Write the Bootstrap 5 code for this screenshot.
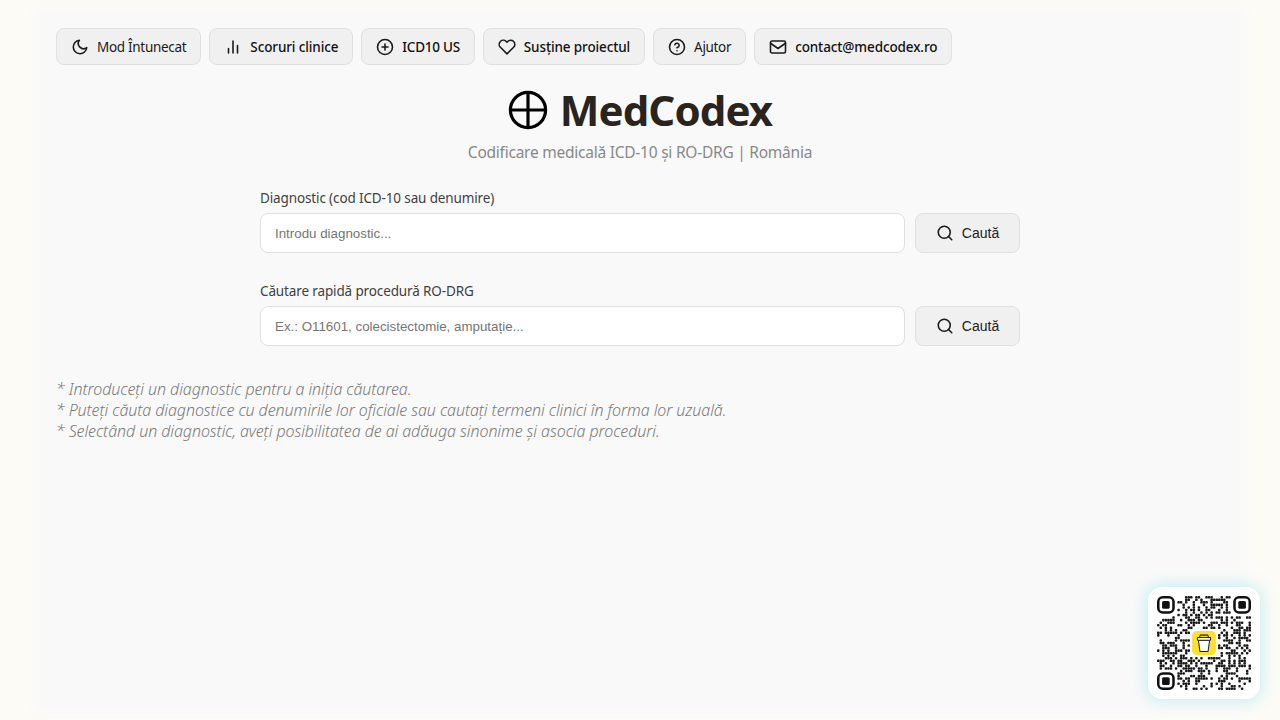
<!DOCTYPE html>
<html lang="ro">
<head>
<meta charset="utf-8">
<title>MedCodex</title>
<link href="https://cdn.jsdelivr.net/npm/bootstrap@5.3.0/dist/css/bootstrap.min.css" rel="stylesheet">
<style>
html,body{height:100%}
body{background:#fcfbf6;font-family:"Noto Sans","Open Sans",sans-serif;overflow:hidden}
.surface{margin:12px 40px 10px;height:698px;padding:16px;background:#f9f9f9;box-shadow:0 0 14px 4px #f9f9f9}
.tool-btn{display:inline-flex;align-items:center;gap:8px;height:37px;padding:1px 14px 0;background:#f0f0f0;border:1px solid #e0e0e0;border-radius:8px;color:#1a1a1a;font-size:13.5px;white-space:nowrap;letter-spacing:-.3px}
.tool-btn.strong{font-weight:500;color:#111;letter-spacing:-.12px}
.tool-btn.strong.tighter{letter-spacing:-.26px}
.tool-btn.snug{letter-spacing:-.34px}
.tool-btn svg,.go-btn svg{width:18px;height:18px;fill:none;stroke:#1a1a1a;stroke-width:2.1;stroke-linecap:round;stroke-linejoin:round;flex:none}
.brand{font-size:42px;font-weight:700;color:#2a241f;line-height:1.2;letter-spacing:-.9px;margin:0}
.brand svg{width:40px;height:40px}
.subtitle{font-size:15.5px;color:#888;letter-spacing:-.24px;margin-top:6px}
.search-zone{width:760px}
.field-label{font-size:13.5px;color:#3f3f3f;margin-bottom:5px;line-height:20px;letter-spacing:-.13px}
.field-input{height:40px;border:1px solid #e0e0e0;border-radius:8px;background:#fff;padding:1px 14px 0;font:13.33px "Liberation Sans",Arial,sans-serif;color:#333}
.field-input::placeholder{color:#757575;opacity:1}
.go-btn{flex:none;width:105px;height:40px;display:inline-flex;align-items:center;justify-content:center;gap:8px;background:#f0f0f0;border:1px solid #e0e0e0;border-radius:8px;color:#222;font:14px "Liberation Sans",Arial,sans-serif}
.notes{font-size:16px;font-style:italic;font-weight:300;color:#7a7a7a;line-height:21px;letter-spacing:-.08px}
.qr-card{position:fixed;right:20px;bottom:21px;width:112px;height:112px;background:#fff;border-radius:14px;box-shadow:0 0 14px 3px rgba(130,225,240,.4);display:flex;align-items:center;justify-content:center}
.qr-card svg{width:94px;height:94px;display:block}
</style>
</head>
<body>
<div class="surface">
  <div class="d-flex flex-wrap gap-2">
    <button class="tool-btn" type="button"><svg viewBox="0 0 24 24"><path d="M21 12.8A9 9 0 1 1 11.2 3a7 7 0 0 0 9.8 9.8z"/></svg>Mod Întunecat</button>
    <button class="tool-btn strong" type="button"><svg viewBox="0 0 24 24"><path d="M18 20V10M12 20V4M6 20v-6"/></svg>Scoruri clinice</button>
    <button class="tool-btn strong tighter" type="button"><svg viewBox="0 0 24 24"><circle cx="12" cy="12" r="10"/><path d="M12 8v8M8 12h8"/></svg>ICD10 US</button>
    <button class="tool-btn strong" type="button"><svg viewBox="0 0 24 24"><path d="M20.8 4.6a5.5 5.5 0 0 0-7.8 0L12 5.7l-1-1.1a5.5 5.5 0 0 0-7.8 7.8l1 1L12 21.2l7.8-7.8 1-1a5.5 5.5 0 0 0 0-7.8z"/></svg>Susține proiectul</button>
    <button class="tool-btn snug" type="button"><svg viewBox="0 0 24 24"><circle cx="12" cy="12" r="10"/><path d="M9.1 9a3 3 0 0 1 5.8 1c0 2-3 3-3 3M12 17h.01"/></svg>Ajutor</button>
    <button class="tool-btn strong" type="button"><svg viewBox="0 0 24 24"><rect x="2" y="4" width="20" height="16" rx="2"/><path d="M22 7l-10 7L2 7"/></svg>contact@medcodex.ro</button>
  </div>
  <div class="text-center" style="margin-top:20px">
    <h1 class="brand d-flex align-items-center justify-content-center" style="gap:12px"><svg viewBox="0 0 40 40" fill="none" stroke="#000" stroke-width="3.2"><circle cx="20" cy="20" r="17.6"/><path d="M20 2v36M2 20h36"/></svg>MedCodex</h1>
    <div class="subtitle">Codificare medicală ICD-10 și RO-DRG | România</div>
  </div>
  <div class="search-zone mx-auto" style="margin-top:23px">
    <div class="field-label">Diagnostic (cod ICD-10 sau denumire)</div>
    <div class="d-flex" style="gap:10px">
      <input class="field-input flex-grow-1" type="text" placeholder="Introdu diagnostic...">
      <button class="go-btn" type="button"><svg viewBox="0 0 24 24"><circle cx="11" cy="11" r="8"/><path d="M21 21l-4.3-4.3"/></svg>Caută</button>
    </div>
    <div class="field-label" style="margin-top:28px">Căutare rapidă procedură RO-DRG</div>
    <div class="d-flex" style="gap:10px">
      <input class="field-input flex-grow-1" type="text" placeholder="Ex.: O11601, colecistectomie, amputație...">
      <button class="go-btn" type="button"><svg viewBox="0 0 24 24"><circle cx="11" cy="11" r="8"/><path d="M21 21l-4.3-4.3"/></svg>Caută</button>
    </div>
  </div>
  <div class="notes" style="margin-top:33px">
    <div>* Introduceți un diagnostic pentru a iniția căutarea.</div>
    <div>* Puteți căuta diagnostice cu denumirile lor oficiale sau cautați termeni clinici în forma lor uzuală.</div>
    <div>* Selectând un diagnostic, aveți posibilitatea de ai adăuga sinonime și asocia proceduri.</div>
  </div>
</div>
<div class="qr-card"><svg id="qr" viewBox="0 0 37 37"></svg></div>
<script>
(function(){
  var n=37,s='',seed=20231;
  function r(){seed=(seed*16807)%2147483647;return seed/2147483647}
  function inFinder(x,y){return (x<8&&y<8)||(x>n-9&&y<8)||(x<8&&y>n-9)}
  function inLogo(x,y){return x>=13&&x<=23&&y>=13&&y<=23}
  var m=[];
  for(var y=0;y<n;y++){m[y]=[];for(var x=0;x<n;x++){m[y][x]=r()<.46}}
  for(y=0;y<n;y++)for(x=0;x<n;x++){
    if(inFinder(x,y)||inLogo(x,y)||!m[y][x])continue;
    s+='<rect x="'+x+'" y="'+y+'" width="1" height="1" rx=".35" fill="#1a1a1a"/>';
  }
  [[0,0],[n-7,0],[0,n-7]].forEach(function(p){
    s+='<rect x="'+(p[0]+.5)+'" y="'+(p[1]+.5)+'" width="6" height="6" rx="1.8" fill="none" stroke="#111"/>';
    s+='<rect x="'+(p[0]+2)+'" y="'+(p[1]+2)+'" width="3" height="3" rx=".6" fill="#111"/>';
  });
  s+='<rect x="13.8" y="13.8" width="9.4" height="9.4" rx="1.8" fill="#ffdf30"/>';
  s+='<g fill="none" stroke="#222" stroke-width=".4" stroke-linejoin="round"><path d="M16.3 17.4h4.4l-.6 4.4h-3.2z" fill="#fff"/><rect x="15.9" y="16.3" width="5.2" height="1.1" rx=".3" fill="#fff"/><path d="M16.7 16.3l.3-.9h3l.3.9"/></g>';
  document.getElementById('qr').innerHTML=s;
})();
</script>
</body>
</html>
